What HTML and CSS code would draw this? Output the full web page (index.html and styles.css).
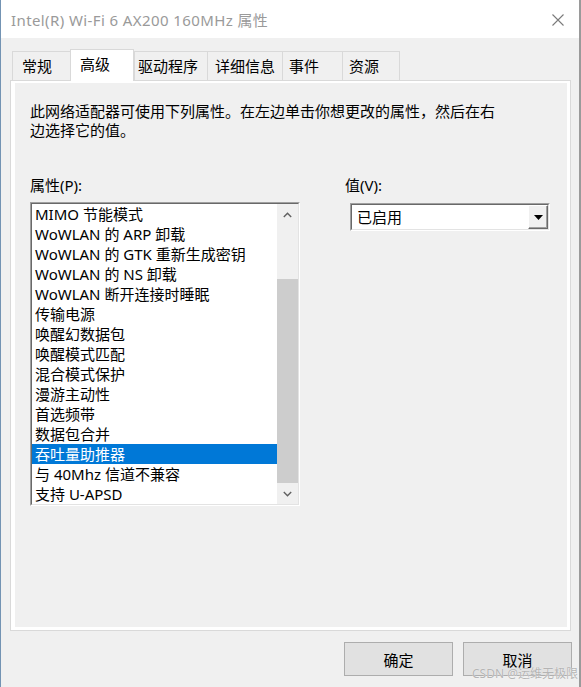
FILE: index.html
```html
<!DOCTYPE html>
<html>
  <head>
    <meta charset="utf-8">
    <link rel="stylesheet" href="styles.css">
  </head>
  <body>
    <div class="window">
      <div class="titlebar">
        <span class="title">Intel(R) Wi-Fi 6 AX200 160MHz 属性</span>
        <svg class="close" width="12" height="12" viewBox="0 0 12 12">
          <path d="M0.5 0.5 L11.5 11.5 M11.5 0.5 L0.5 11.5" stroke="#7a7a7a" stroke-width="1.1" fill="none"/>
        </svg>
      </div>
      <div class="dialog">
        <div class="tabs">
          <div class="tab tab-general">常规</div>
          <div class="tab tab-advanced active">高级</div>
          <div class="tab tab-driver">驱动程序</div>
          <div class="tab tab-details">详细信息</div>
          <div class="tab tab-events">事件</div>
          <div class="tab tab-resources">资源</div>
        </div>
        <div class="panel">
          <div class="panelInner">
            <p class="desc">此网络适配器可使用下列属性。在左边单击你想更改的属性，然后在右<br>边选择它的值。</p>
            <div class="columns">
              <div class="colLeft">
                <div class="label">属性(P):</div>
                <div class="listbox">
                  <div class="listboxIn">
                    <ul class="items">
                      <li>MIMO 节能模式</li>
                      <li>WoWLAN 的 ARP 卸载</li>
                      <li>WoWLAN 的 GTK 重新生成密钥</li>
                      <li>WoWLAN 的 NS 卸载</li>
                      <li>WoWLAN 断开连接时睡眠</li>
                      <li>传输电源</li>
                      <li>唤醒幻数据包</li>
                      <li>唤醒模式匹配</li>
                      <li>混合模式保护</li>
                      <li>漫游主动性</li>
                      <li>首选频带</li>
                      <li>数据包合并</li>
                      <li class="selected">吞吐量助推器</li>
                      <li>与 40Mhz 信道不兼容</li>
                      <li>支持 U-APSD</li>
                    </ul>
                    <div class="scrollbar">
                      <div class="sbButton">
                        <svg width="9" height="6" viewBox="0 0 9 6"><path d="M0.8 5 L4.5 1.3 L8.2 5" stroke="#606060" stroke-width="1.4" fill="none"/></svg>
                      </div>
                      <div class="sbTrack"><div class="sbThumb"></div></div>
                      <div class="sbButton">
                        <svg width="9" height="6" viewBox="0 0 9 6"><path d="M0.8 1 L4.5 4.7 L8.2 1" stroke="#606060" stroke-width="1.4" fill="none"/></svg>
                      </div>
                    </div>
                  </div>
                </div>
              </div>
              <div class="colRight">
                <div class="label">值(V):</div>
                <div class="combo">
                  <div class="comboIn">
                    <span class="comboText">已启用</span>
                    <div class="comboButton">
                      <svg width="9" height="5" viewBox="0 0 9 5"><path d="M0 0 L9 0 L4.5 5 Z" fill="#000"/></svg>
                    </div>
                  </div>
                </div>
              </div>
            </div>
          </div>
        </div>
        <div class="footer">
          <button class="btn">确定</button>
          <button class="btn">取消</button>
        </div>
      </div>
      <div class="watermark">CSDN @运维无极限</div>
    </div>
  </body>
</html>
```

FILE: styles.css
```css
html, body {
  margin: 0;
  padding: 0;
  background-color: #f0f0f0;
}

body {
  font-family: 'Noto Sans', 'Noto Sans CJK SC', sans-serif;
  font-size: 15px;
  color: #000000;
}

.window {
  position: relative;
  width: 578px;
  height: 687px;
  border-left: 1px solid #7393b3;
  border-right: 2px solid #9a9a9a;
  background-color: #f0f0f0;
  overflow: hidden;
}

.titlebar {
  height: 38px;
  background-color: #ffffff;
  display: flex;
  align-items: center;
  justify-content: space-between;
}

.title {
  padding-left: 10px;
  line-height: 38px;
  color: #9a9a9a;
  font-size: 15px;
  letter-spacing: 0.4px;
  margin-top: 2px;
}

.close {
  margin-right: 15px;
  margin-top: 1px;
}

.tabs {
  display: flex;
  align-items: flex-end;
  height: 31px;
  margin-top: 11px;
  margin-left: 11px;
}

.tab {
  box-sizing: border-box;
  height: 29px;
  line-height: 28px;
  border: 1px solid #d9d9d9;
  border-bottom: none;
  border-right: none;
  background-color: #f0f0f0;
}

.tab-resources {
  border-right: 1px solid #d9d9d9;
}

.tab.active {
  position: relative;
  z-index: 1;
  height: 32px;
  line-height: 29px;
  margin-bottom: -1px;
  background-color: #ffffff;
  border-right: 1px solid #d9d9d9;
}

.tab-general { width: 58px; padding-left: 9px; }
.tab-advanced { width: 64px; padding-left: 9px; }
.tab-driver { width: 73px; padding-left: 3px; }
.tab-details { width: 75px; padding-left: 7px; }
.tab-events { width: 60px; padding-left: 6px; }
.tab-resources { width: 58px; padding-left: 6px; }

.panel {
  box-sizing: border-box;
  width: 561px;
  height: 551px;
  margin-left: 9px;
  border: 1px solid #d9d9d9;
  background-color: #ffffff;
}

.panelInner {
  box-sizing: border-box;
  height: 100%;
  border-style: solid;
  border-color: #ffffff;
  border-width: 2px 3px 3px 4px;
  background-color: #f0f0f0;
  padding: 19px 0 0 15px;
}

.desc {
  margin: 0;
  line-height: 19px;
}

.columns {
  display: flex;
  margin-top: 36px;
}

.colLeft {
  width: 270px;
}

.colRight {
  margin-left: 45px;
}

.label {
  line-height: 19px;
}

.listbox {
  margin-top: 7px;
  border: 1px solid;
  border-color: #a0a0a0 #ffffff #ffffff #a0a0a0;
}

.listboxIn {
  display: flex;
  border: 1px solid;
  border-color: #696969 #e3e3e3 #e3e3e3 #696969;
  background-color: #ffffff;
}

.items {
  list-style: none;
  margin: 0;
  padding: 0;
  width: 245px;
}

.items li {
  height: 20px;
  line-height: 20px;
  padding-left: 3px;
  white-space: nowrap;
}

.items li.selected {
  background-color: #0078d7;
  color: #ffffff;
}

.scrollbar {
  width: 21px;
  height: 300px;
  background-color: #f0f0f0;
  display: flex;
  flex-direction: column;
}

.sbButton {
  height: 21px;
  display: flex;
  align-items: center;
  justify-content: center;
}

.sbTrack {
  flex: 1;
}

.sbThumb {
  margin-top: 54px;
  height: 204px;
  background-color: #cdcdcd;
}

.combo {
  margin-top: 8px;
  margin-left: 5px;
  width: 198px;
  border: 1px solid;
  border-color: #a0a0a0 #ffffff #ffffff #a0a0a0;
}

.comboIn {
  height: 24px;
  display: flex;
  align-items: center;
  justify-content: space-between;
  border: 1px solid;
  border-color: #696969 #e3e3e3 #e3e3e3 #696969;
  background-color: #ffffff;
}

.comboText {
  padding-left: 5px;
  line-height: 24px;
}

.comboButton {
  box-sizing: border-box;
  width: 20px;
  height: 24px;
  border: 1px solid;
  border-color: #ffffff #696969 #696969 #ffffff;
  box-shadow: inset -1px -1px #a0a0a0;
  background-color: #f0f0f0;
  display: flex;
  align-items: center;
  justify-content: center;
}

.footer {
  display: flex;
  justify-content: flex-end;
  gap: 10px;
  padding: 11px 7px 0 0;
}

.btn {
  width: 109px;
  height: 34px;
  margin: 0;
  padding: 0;
  border: 1px solid #adadad;
  background-color: #e1e1e1;
  font-family: 'Noto Sans', 'Noto Sans CJK SC', sans-serif;
  font-size: 15px;
  color: #000000;
}

/* watermark over the cancel button */
.watermark {
  position: absolute;
  right: 1px;
  bottom: 6px;
  font-size: 12px;
  line-height: 14px;
  color: #b4b4b4;
  text-shadow: 0 0 1px #ffffff;
}
```
